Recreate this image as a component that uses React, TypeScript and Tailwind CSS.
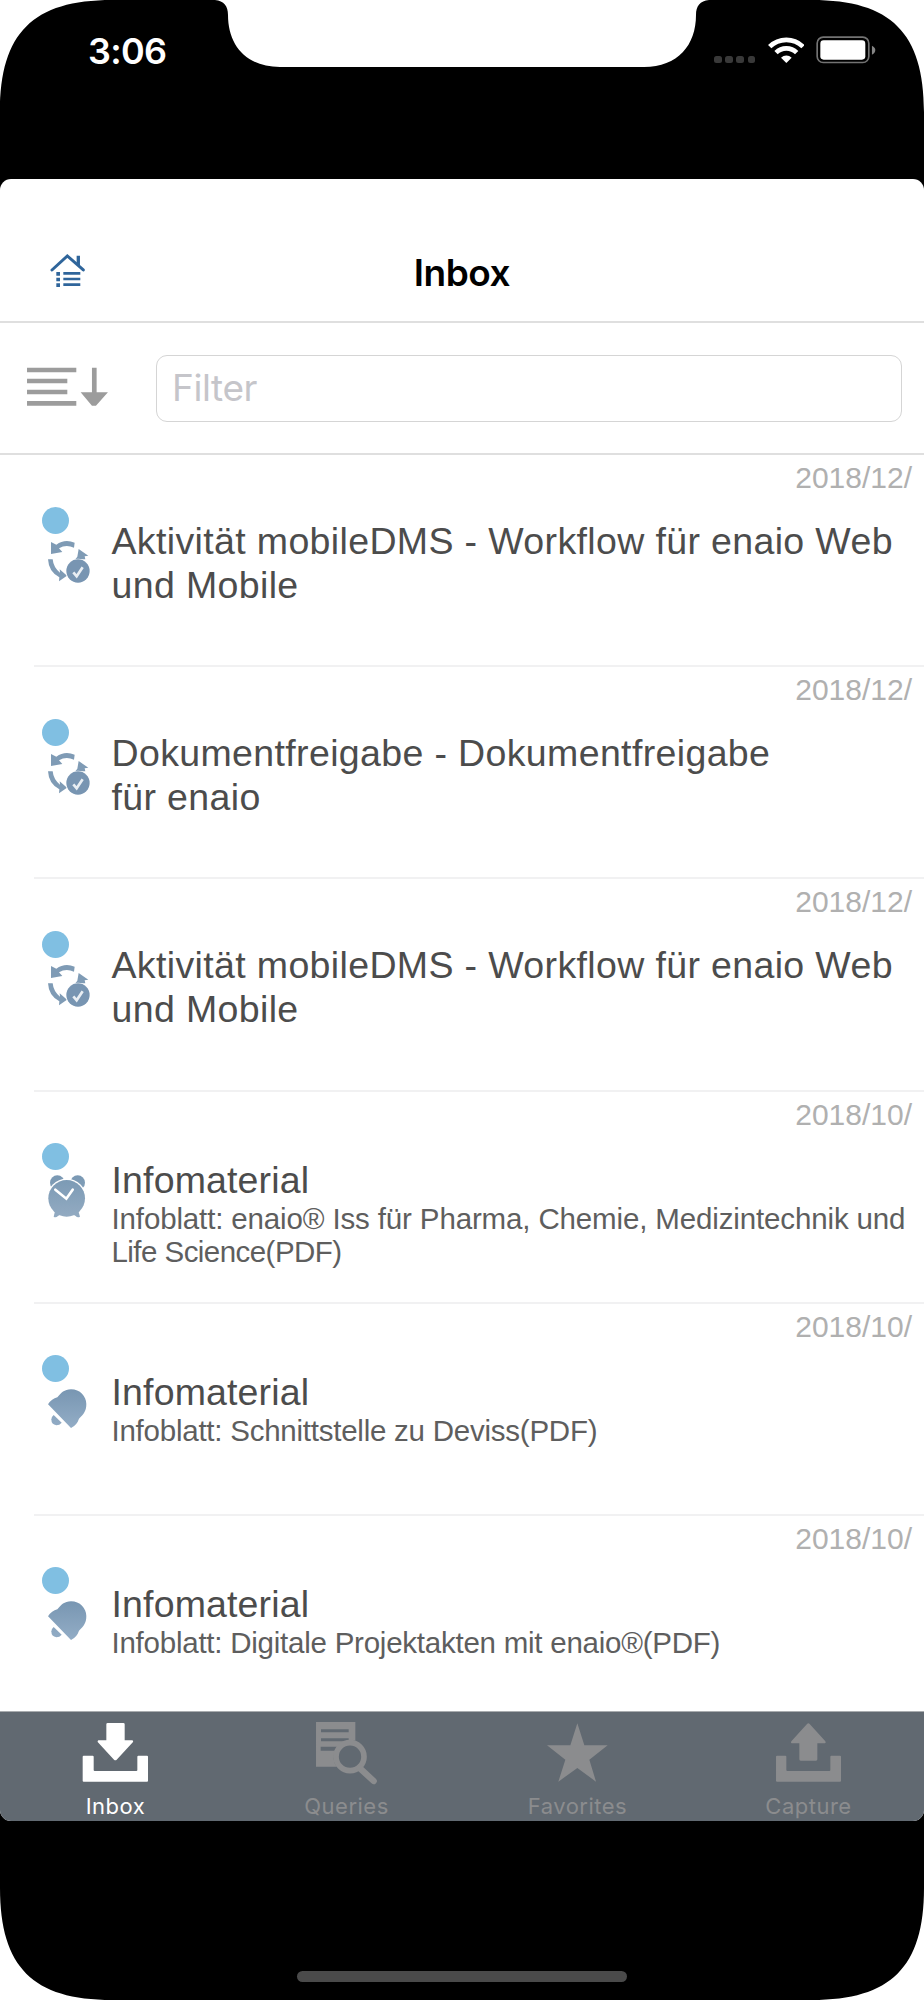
import type { ReactNode } from "react"

type RowIcon = "workflow" | "alarm" | "bell"

interface InboxItem {
  date: string
  icon: RowIcon
  title: ReactNode
  detail?: ReactNode
}

const items: InboxItem[] = [
  { date: "2018/12/", icon: "workflow", title: <>Aktivität mobileDMS - Workflow für enaio Web<br />und Mobile</> },
  { date: "2018/12/", icon: "workflow", title: <>Dokumentfreigabe - Dokumentfreigabe<br />für enaio</> },
  { date: "2018/12/", icon: "workflow", title: <>Aktivität mobileDMS - Workflow für enaio Web<br />und Mobile</> },
  {
    date: "2018/10/",
    icon: "alarm",
    title: "Infomaterial",
    detail: (
      <>
        <span className="tracking-[-0.14px]">Infoblatt: enaio® Iss für Pharma, Chemie, Medizintechnik und</span>
        <br />
        <span className="tracking-[-0.55px]">Life Science(PDF)</span>
      </>
    ),
  },
  { date: "2018/10/", icon: "bell", title: "Infomaterial", detail: "Infoblatt: Schnittstelle zu Deviss(PDF)" },
  { date: "2018/10/", icon: "bell", title: "Infomaterial", detail: "Infoblatt: Digitale Projektakten mit enaio®(PDF)" },
]

function WorkflowIcon() {
  return (
    <svg viewBox="84 180 126 130" className="mt-[6px] ml-[6px] h-[43.3px] w-[42px]" fill="#7f9bb5">
      <path d="M164 188 Q134 176 109 194 L93 186 V222 L127 216 L117 205 Q138 192 162 203Z" />
      <path d="M84 238 H98 Q100 262 120 278 L119 268 L141 287 L117 304 L118 292 Q86 276 84 238Z" />
      <path d="M176 207 L205 227 L194 229 L196 238 H166 L172 230Z" />
      <circle cx="174" cy="273" r="37" fill="#fff" />
      <circle cx="174" cy="273" r="35" fill="#7895b2" />
      <path d="M160 277 L170 289 L188 262" fill="none" stroke="#e9eef3" strokeWidth="8" />
    </svg>
  )
}

function AlarmIcon() {
  return (
    <svg viewBox="85 164 114 128" className="mt-[5px] ml-[6px] h-[42.7px] w-[38px]">
      <defs>
        <linearGradient id="alarm" x1="0" y1="164" x2="0" y2="292" gradientUnits="userSpaceOnUse">
          <stop stopColor="#7998b3" />
          <stop offset="1" stopColor="#93abc2" />
        </linearGradient>
      </defs>
      <g fill="url(#alarm)">
        <circle cx="113" cy="187" r="22" />
        <circle cx="174" cy="187" r="22" />
        <circle cx="141" cy="234" r="59" fill="#fff" />
        <circle cx="141" cy="234" r="55" />
        <path d="M107 268 L102 289 Q108 294 115 287 L128 279Z M175 268 L181 289 Q174 294 168 287 L154 279Z" />
      </g>
      <path d="M107 208 L140 235 L159 208" fill="none" stroke="#fff" strokeWidth="8" strokeLinecap="round" />
    </svg>
  )
}

function BellIcon() {
  return (
    <svg viewBox="84 176 116 118" className="mt-[6.5px] ml-[6px] h-[39.3px] w-[38.7px]">
      <defs>
        <linearGradient id="bell" x1="0" y1="176" x2="0" y2="294" gradientUnits="userSpaceOnUse">
          <stop stopColor="#7896b2" />
          <stop offset="1" stopColor="#93adc6" />
        </linearGradient>
      </defs>
      <g fill="url(#bell)">
        <path d="M84 222 Q95 205 112 201 C123 188 133 177 153 177 C180 177 199 198 199 221 C199 242 191 252 177 265 Q171 284 153 293Z" />
        <path d="M101 254 L125 277 Q119 285 109 285 Q94 283 94 267 Q94 259 101 254Z" />
      </g>
    </svg>
  )
}

const rowIcons = { workflow: WorkflowIcon, alarm: AlarmIcon, bell: BellIcon }

function StatusBar() {
  return (
    <div className="flex h-[178.5px] shrink-0 items-start pt-[25.5px] pl-[88px] text-white">
      <span className="w-[626px] text-[36px] leading-[50px] font-semibold tracking-[-0.7px]">3:06</span>
      <div className="mt-[30px] flex gap-[3.7px]">
        {[0, 1, 2, 3].map(i => (
          <span key={i} className="size-[7.5px] rounded-[2.5px] bg-[#393939]" />
        ))}
      </div>
      <svg viewBox="917 109 110 82" className="mt-[10.5px] ml-[12.5px] h-[27.3px] w-[36.7px]" fill="none" stroke="#fff" strokeWidth="14">
        <path d="M922 141 A71 71 0 0 1 1022 141" />
        <path d="M941 159 A44 44 0 0 1 1003 159" />
        <path d="M972 190 L956 174 A24 24 0 0 1 988 174Z" fill="#fff" stroke="none" />
      </svg>
      <svg viewBox="1064 109 178 84" className="mt-[10.5px] ml-[12px] h-[28px] w-[59.3px]">
        <rect x="1067.5" y="112.5" width="155" height="76" rx="18" fill="none" stroke="#737373" strokeWidth="5" />
        <rect x="1077" y="122" width="135" height="58" rx="10" fill="#fff" />
        <path d="M1232 138 Q1242 143 1242 151 Q1242 160 1232 165Z" fill="#858585" />
      </svg>
    </div>
  )
}

function Header() {
  return (
    <header className="grid h-[142px] shrink-0 grid-cols-[1fr_auto_1fr] items-start pt-[67px]">
      <svg viewBox="148 70 106 106" className="mt-[7.5px] ml-[49.5px] size-[35.3px]" fill="#2f659b">
        <path d="M154 121 L200 79 L248 121" fill="none" stroke="#2f659b" strokeWidth="9" strokeLinecap="round" />
        <path d="M228 78H238V110L228 103Z" />
        <path d="M167 127H178V138H167Z M167 144H178V155H167Z M167 161H178V172H167Z" />
        <path d="M188 127H239V135H188Z M188 144H239V152H188Z M188 161H239V169H188Z" />
      </svg>
      <h1 className="text-[37px] leading-[54px] font-semibold tracking-[-0.5px] text-black">Inbox</h1>
    </header>
  )
}

function FilterBar() {
  return (
    <div className="flex h-[134.5px] shrink-0 items-center border-y-2 border-[#dfdfdf] pr-[22px] pl-[26.7px]">
      <svg viewBox="80 412 244 118" className="-mt-[1.5px] h-[39.3px] w-[81.3px]" fill="#9c9c9c">
        <path d="M80 414H228V428H80Z M80 447H201V461H80Z M80 480H201V494H80Z M80 514H228V528H80Z" />
        <path d="M275 414H289V488H323L287 528H275L241 488H275Z" />
      </svg>
      <div className="mt-px ml-[48px] flex h-[67px] flex-1 items-center rounded-[11px] border border-[#d5d5d5] pb-[2px] pl-[15px] text-[37px] tracking-[-0.4px] text-[#c5c5ca]">
        Filter
      </div>
    </div>
  )
}

function InboxRow({ item }: { item: InboxItem }) {
  const Icon = rowIcons[item.icon]

  return (
    <li className="ml-[34px] flex h-[212.2px] shrink-0 flex-col border-b-2 border-[#f1f1f2]">
      <time className="pt-[5px] pr-[12px] text-right text-[30px] leading-[36px] text-[#b0b0b0]">{item.date}</time>
      <div className="flex">
        <div className="mt-[10.5px] w-[77.5px] pl-[8.3px]">
          <div className="size-[27px] rounded-full bg-[#80bfe2]" />
          <Icon />
        </div>
        <div className={item.detail ? "mt-[25px]" : "mt-[22.5px]"}>
          <p className={`text-[37.5px] leading-[44px] whitespace-nowrap text-[#4c4c4c] ${item.detail ? "tracking-[0.15px]" : "tracking-[0.36px]"}`}>
            {item.title}
          </p>
          {item.detail && (
            <p className="text-[29.5px] leading-[33.5px] tracking-[-0.24px] whitespace-nowrap text-[#5e5e5e]">{item.detail}</p>
          )}
        </div>
      </div>
    </li>
  )
}

const tabs = [
  {
    label: "Inbox",
    active: true,
    icon: (
      <>
        <path d="M324 100H371Q375 100 375 104V152H398Q402 154 400 157L351 210Q347 214 343 210L294 157Q293 154 296 152H320V104Q320 100 324 100Z" />
        <path d="M252 198H279Q282 198 282 201V241Q282 244 285 244H410Q413 244 413 241V201Q413 198 416 198H442Q445 198 445 201V273Q445 276 442 276H252Q249 276 249 273V201Q249 198 252 198Z" />
      </>
    ),
  },
  {
    label: "Queries",
    icon: (
      <g transform="translate(-694 0)">
        <path d="M950 97H1068V153Q1039 148 1022 171H964V183H1008Q996 209 1012 231H950Z" />
        <path d="M965 123H1048M965 150H1048" stroke="#616971" strokeWidth="9" />
        <circle cx="1052" cy="201" r="42" fill="#616971" stroke="currentColor" strokeWidth="17" />
        <path d="M1082 236L1123 274" stroke="currentColor" strokeWidth="19" strokeLinecap="round" />
      </g>
    ),
  },
  {
    label: "Favorites",
    icon: <path transform="translate(2 0)" d="M345 101L366 167H436L381 210L401 276L345 235L288 276L309 210L254 167H324Z" />,
  },
  {
    label: "Capture",
    icon: (
      <g transform="translate(-694 0)">
        <path d="M1037 103Q1041 99 1045 103L1092 155Q1095 159 1091 161H1068V209Q1068 213 1064 213H1018Q1014 213 1014 209V161H991Q987 159 990 155Z" />
        <path d="M947 198H972Q975 198 975 201V241Q975 244 978 244H1104Q1107 244 1107 241V201Q1107 198 1110 198H1136Q1139 198 1139 201V273Q1139 276 1136 276H947Q944 276 944 273V201Q944 198 947 198Z" />
      </g>
    ),
  },
]

function TabBar() {
  return (
    <nav className="grid h-[110px] shrink-0 grid-cols-4 border-t border-[#a9acaf] bg-[#616971]">
      {tabs.map(tab => (
        <div key={tab.label} className={`flex flex-col items-center pt-[9px] ${tab.active ? "text-white" : "text-[#8b8c8e]"}`}>
          <svg viewBox="247 94 200 192" className="h-[64px] w-[66.7px]" fill="currentColor">
            {tab.icon}
          </svg>
          <span className="mt-[7px] text-[22px] leading-[28px] tracking-[0.5px]">{tab.label}</span>
        </div>
      ))}
    </nav>
  )
}

// White cut-outs for the rounded display corners and the notch
function DeviceFrame() {
  const corner = "M0 112C0 33 33 0 112 0H0Z"

  return (
    <svg viewBox="0 0 924 2000" className="pointer-events-none absolute inset-0 h-full w-full" fill="#fff">
      <path d={corner} />
      <path d={corner} transform="translate(924 0) scale(-1 1)" />
      <path d={corner} transform="translate(0 2000) scale(1 -1)" />
      <path d={corner} transform="translate(924 2000) scale(-1 -1)" />
      <path d="M215 0C224 1 228 6 228 15C228 45 246 67 280 67H644C678 67 696 45 696 15C696 6 700 1 709 0Z" />
    </svg>
  )
}

export default function App() {
  return (
    <div className="relative flex h-[2000px] w-[924px] flex-col overflow-hidden bg-black font-['Inter',sans-serif]">
      <StatusBar />
      <main className="flex h-[1642.5px] shrink-0 flex-col overflow-hidden rounded-[11px] bg-white">
        <Header />
        <FilterBar />
        <ul className="flex min-h-0 flex-1 flex-col overflow-hidden font-['Liberation_Sans',sans-serif]">
          {items.map((item, i) => (
            <InboxRow key={i} item={item} />
          ))}
        </ul>
        <TabBar />
      </main>
      <div className="mx-auto mt-[150px] h-[11px] w-[330px] rounded-full bg-[#4a4a4a]" />
      <DeviceFrame />
    </div>
  )
}
